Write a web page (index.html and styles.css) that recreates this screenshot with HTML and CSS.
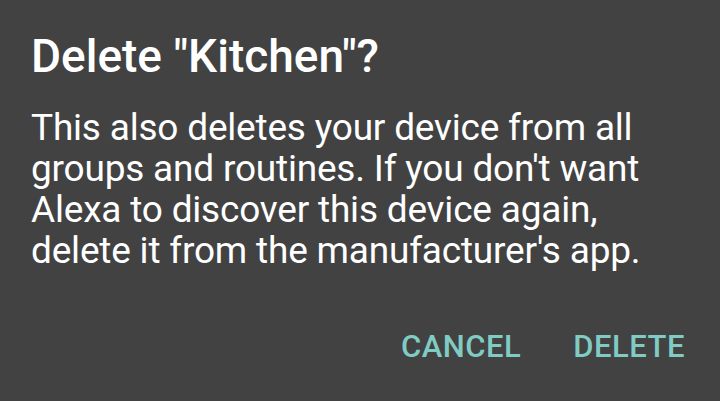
FILE: index.html
```html
<!DOCTYPE html>
<html>
<head>
<meta charset="utf-8">
<link rel="stylesheet" href="styles.css">
</head>
<body>
<div class="dialog">
  <h1 class="title">Delete "Kitchen"?</h1>
  <p class="message">This also deletes your device from all groups and routines. If you don't want Alexa to discover this device again, delete it from the manufacturer's app.</p>
  <div class="actions">
    <button class="btn">CANCEL</button>
    <button class="btn">DELETE</button>
  </div>
</div>
</body>
</html>
```
FILE: styles.css
```css
html, body {
  margin: 0;
  padding: 0;
  background: #424242;
  width: 720px;
  height: 401px;
  overflow: hidden;
}
.dialog {
  font-family: Roboto, "Noto Sans", sans-serif;
  padding: 29px 35px 0 31px;
  color: #ffffff;
}
.title {
  margin: 0;
  font-size: 46px;
  font-weight: 500;
  line-height: 54px;
}
.message {
  margin: 24px 0 0;
  font-size: 37px;
  line-height: 41px;
  font-weight: 400;
  color: #ffffff;
  letter-spacing: -0.2px;
}
.actions {
  display: flex;
  justify-content: flex-end;
  gap: 52px;
  margin-top: 58px;
}
.btn {
  background: none;
  border: none;
  padding: 0;
  font-family: Roboto, sans-serif;
  font-size: 31px;
  line-height: 36px;
  font-weight: 500;
  color: #80cbc4;
  letter-spacing: 0.5px;
}
```
